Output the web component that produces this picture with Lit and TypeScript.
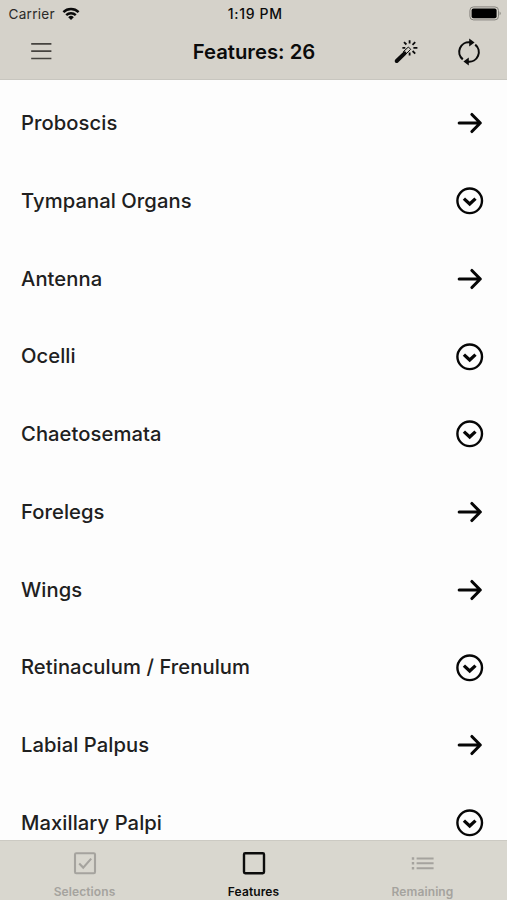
import { LitElement, html, css, svg } from "lit";
import { customElement } from "lit/decorators.js";
import { classMap } from "lit/directives/class-map.js";

type Kind = "arrow" | "expand";

const features: { name: string; kind: Kind }[] = [
  { name: "Proboscis", kind: "arrow" },
  { name: "Tympanal Organs", kind: "expand" },
  { name: "Antenna", kind: "arrow" },
  { name: "Ocelli", kind: "expand" },
  { name: "Chaetosemata", kind: "expand" },
  { name: "Forelegs", kind: "arrow" },
  { name: "Wings", kind: "arrow" },
  { name: "Retinaculum / Frenulum", kind: "expand" },
  { name: "Labial Palpus", kind: "arrow" },
  { name: "Maxillary Palpi", kind: "expand" },
];

const shapes = {
  arrow: svg`<path d="M5.2 14H26M17.9 5.5 26.3 14l-8.4 8.5" stroke-width="3.1" stroke-linecap="round" stroke-linejoin="round"/>`,
  expand: svg`<circle cx="15.7" cy="13.8" r="12.3" stroke-width="2.4"/><path d="M9.9 11.6 15.7 17 21.5 11.6" stroke-width="3.3"/>`,
};

const tabs = [
  {
    label: "Selections",
    active: false,
    icon: svg`<rect x="3" y="3.3" width="20" height="20" rx="1.2" stroke-width="2.1"/><path d="m7.2 13.6 4 4 8-9" stroke-width="2.1"/>`,
  },
  {
    label: "Features",
    active: true,
    icon: svg`<rect x="3" y="3.3" width="20" height="20" rx="1.2" stroke-width="2.4"/>`,
  },
  {
    label: "Remaining",
    active: false,
    icon: svg`<path d="M6.6 8.5H23.6M6.6 13.3H23.6M6.6 18.2H23.6" stroke-width="1.9"/><path d="M1.8 8.5H4.2M1.8 13.3H4.2M1.8 18.2H4.2" stroke-width="2.4"/>`,
  },
];

@customElement("app-root")
export class AppRoot extends LitElement {
  static styles = css`
    :host {
      display: flex;
      flex-direction: column;
      height: 900px;
      overflow: hidden;
      background: #fdfdfd;
      color: #202020;
      font-family: Inter, "Liberation Sans", sans-serif;
    }
    svg {
      display: block;
      flex: none;
      fill: none;
      stroke: currentColor;
    }
    header {
      flex: none;
      box-sizing: border-box;
      height: 80px;
      background: #d5d2ca;
      border-bottom: 1px solid #c8c6bf;
      color: #0b0b0b;
    }
    .status {
      display: grid;
      grid-template-columns: 1fr auto 1fr;
      align-items: center;
      height: 27px;
      padding: 0 6px 0 8.5px;
      font-size: 13.6px;
    }
    .carrier {
      display: flex;
      align-items: center;
      gap: 7px;
      color: #2b2a28;
      letter-spacing: 0.25px;
    }
    .carrier svg {
      color: #0b0b0b;
    }
    .time {
      padding-left: 1px;
      font-size: 14px;
      font-weight: 550;
      letter-spacing: 0.7px;
    }
    .battery {
      justify-self: end;
    }
    .bar {
      display: grid;
      grid-template-columns: 1fr auto 1fr;
      align-items: center;
      height: 50px;
      padding: 0 24px 0 26px;
    }
    .menu {
      color: #45433f;
    }
    .title {
      margin-left: -1px;
      padding-bottom: 1px;
      font-size: 20.3px;
      font-weight: 600;
    }
    .actions {
      display: flex;
      justify-content: flex-end;
      gap: 35px;
    }
    main {
      flex: 1;
      min-height: 0;
      overflow: hidden;
      padding-top: 4.4px;
    }
    .row {
      display: flex;
      align-items: center;
      justify-content: space-between;
      height: 77.78px;
      padding: 0 23px 0 21px;
      font-size: 20.2px;
      font-weight: 550;
      letter-spacing: 0.07px;
    }
    .row span {
      padding-bottom: 1.4px;
    }
    .row svg {
      color: #060606;
    }
    footer {
      flex: none;
      box-sizing: border-box;
      height: 60px;
      display: grid;
      grid-template-columns: repeat(3, 1fr);
      background: #d9d7cf;
      border-top: 1px solid #cccac3;
    }
    .tab {
      display: flex;
      flex-direction: column;
      align-items: center;
      gap: 8px;
      padding-top: 9px;
      color: #a5a39e;
      font-size: 12px;
      line-height: 16px;
      font-weight: 600;
      letter-spacing: 0.1px;
    }
    .active {
      color: #0c0c0c;
    }
  `;

  render() {
    return html`
      <header>
        <div class="status">
          <div class="carrier">
            <span>Carrier</span>
            <svg width="18" height="14" viewBox="0 0 18 14" stroke-width="2.4">
              <path d="M1.4 5.2a10.8 10.8 0 0 1 15.2 0M4.2 8.2a6.9 6.9 0 0 1 9.6 0" />
              <path d="M9 13 6.2 10.2a4 4 0 0 1 5.6 0z" fill="currentColor" stroke="none" />
            </svg>
          </div>
          <div class="time">1:19 PM</div>
          <svg class="battery" width="32" height="16" viewBox="0 0 32 16">
            <rect x="0.9" y="0.9" width="28.6" height="13" rx="3.6" stroke="#85837d" stroke-width="1" />
            <rect x="2.6" y="2.6" width="25" height="9.6" rx="1.9" fill="#000" stroke="none" />
            <path d="M30.6 5.5a2.2 2.2 0 0 1 0 3.8z" fill="#85837d" stroke="none" />
          </svg>
        </div>
        <div class="bar">
          <svg class="menu" width="30" height="28" viewBox="0 0 30 28" stroke-width="1.7">
            <path d="M5.2 5.8h20.2M5.2 13.2h20.2M5.2 20.5h20.2" />
          </svg>
          <div class="title">Features: 26</div>
          <div class="actions">
            <svg width="28" height="28" viewBox="0 0 28 28">
              <path d="M4.7 23 12.6 15.4" stroke-width="4" stroke-linecap="round" />
              <path d="m11.2 13.8 5.2-4.8 2.3 2.3-5 5" stroke-width="1" />
              <path
                d="M17.6 2.2v3.3M17.6 14.4v3.2M21.4 9.9h4M10.4 9.9h2.9M12 4.1l2.4 2.4M23.2 4.1l-2.7 2.7M20.6 13l2.6 2.6"
                stroke-width="1.8"
              />
            </svg>
            <svg width="28" height="28" viewBox="0 0 28 28" stroke-width="2.1">
              <path d="M7.8 21.4A9.6 9.6 0 0 1 15 4.4M20.2 6.6A9.6 9.6 0 0 1 13 23.6" />
              <path d="M14.2 0.6 19.6 4.6 14.2 8.6zM13.8 19.4 8.4 23.4l5.4 4z" fill="currentColor" stroke="none" />
            </svg>
          </div>
        </div>
      </header>
      <main>
        ${features.map(
          (f) => html`<div class="row">
            <span>${f.name}</span>
            <svg width="30" height="28" viewBox="0 0 30 28">${shapes[f.kind]}</svg>
          </div>`
        )}
      </main>
      <footer>
        ${tabs.map(
          (t) => html`<div class=${classMap({ tab: true, active: t.active })}>
            <svg width="26" height="26" viewBox="0 0 26 26">${t.icon}</svg>
            <span>${t.label}</span>
          </div>`
        )}
      </footer>
    `;
  }
}
